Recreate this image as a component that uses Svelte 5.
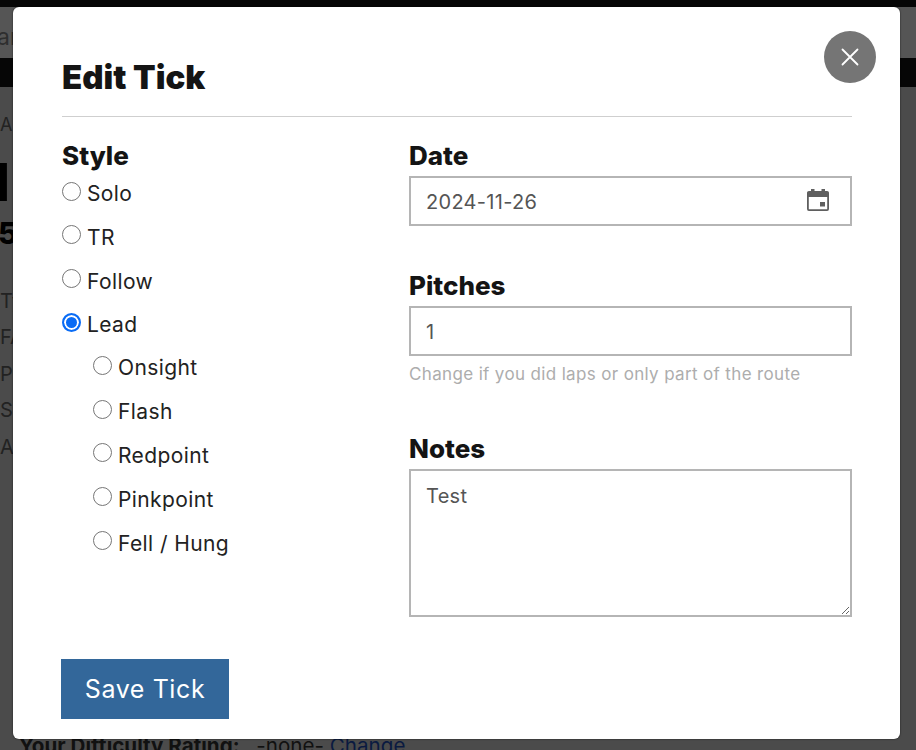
<script>
	let style = $state("lead")
	let leadStyle = $state("")
	let date = $state("2024-11-26")
	let pitches = $state("1")
	let notes = $state("Test")

	const styles = [
		{ value: "solo", label: "Solo" },
		{ value: "tr", label: "TR" },
		{ value: "follow", label: "Follow" },
		{ value: "lead", label: "Lead" }
	]
	const leadStyles = ["Onsight", "Flash", "Redpoint", "Pinkpoint", "Fell / Hung"]
</script>

<div class="page">
	<header class="nav">
		<div class="search"><span>ar</span></div>
	</header>
	<div class="crumbs">Al</div>
	<div class="title">I</div>
	<div class="grade">5</div>
	<div class="facts">
		<div>Ty</div>
		<div>FA</div>
		<div>Pa</div>
		<div>SI</div>
		<div>Ac</div>
	</div>
	<div class="rating"><b>Your Difficulty Rating:</b> <span>-none-</span> <a href="#change">Change</a></div>
</div>

<div class="modal">
	<button class="close" aria-label="Close">
		<svg width="18" height="18" viewBox="0 0 18 18"><path d="M1.5 1.5l15 15M16.5 1.5l-15 15" stroke="#fff" stroke-width="1.8" stroke-linecap="round" fill="none" /></svg>
	</button>

	<h2>Edit Tick</h2>

	<div class="columns">
		<div class="left">
			<h3>Style</h3>
			{#each styles as s}
				<label class="radio">
					<input type="radio" name="style" value={s.value} bind:group={style}>
					<span>{s.label}</span>
				</label>
			{/each}
			<div class="sub">
				{#each leadStyles as s}
					<label class="radio">
						<input type="radio" name="lead" value={s} bind:group={leadStyle}>
						<span>{s}</span>
					</label>
				{/each}
			</div>
		</div>

		<div class="right">
			<div class="field date">
				<h3>Date</h3>
				<div class="date-box">
					<input type="text" bind:value={date}>
					<svg class="cal" width="24" height="24" viewBox="0 0 24 24" fill="none">
						<rect x="1.9" y="3.9" width="20.2" height="18.2" rx="1" stroke="#5f5f5f" stroke-width="1.8" />
						<path d="M1.5 4h21v5h-21zM5 1h3.500v3H5zM15.500 1H19v3h-3.500zM14 14h5v4.500h-5z" fill="#5f5f5f" />
					</svg>
				</div>
			</div>
			<div class="field pitches">
				<h3>Pitches</h3>
				<input type="text" bind:value={pitches}>
				<div class="hint">Change if you did laps or only part of the route</div>
			</div>
			<div class="field">
				<h3>Notes</h3>
				<textarea bind:value={notes}></textarea>
			</div>
		</div>
	</div>

	<button class="save">Save Tick</button>
</div>

<style>
	:global(body) {
		background: #4b4b4b;
		font-family: Inter, "Liberation Sans", sans-serif;
	}

	/* - page behind the modal - */
	.page {
		height: 750px;
		overflow: hidden;
		color: #1a1a1a;
		box-sizing: border-box;
	}

	.nav {
		height: 87px;
		padding: 7px 0 0;
		box-sizing: border-box;
		background: #060606;
	}

	.search {
		height: 51px;
		background: #555;
		color: #2e2e2e;
		font-size: 23px;
		line-height: 60px;
		overflow: hidden;
		white-space: nowrap;
	}

	.search span {
		margin-left: -3px;
	}

	.crumbs {
		margin-top: 28px;
		font-size: 18px;
		line-height: 20px;
		color: #222;
	}

	.title {
		margin-top: 20px;
		font-size: 52px;
		line-height: 56px;
		font-weight: 800;
		color: #000;
		margin-left: -5px;
	}

	.grade {
		margin-top: 6px;
		font-size: 30px;
		line-height: 32px;
		font-weight: 800;
		color: #000;
		margin-left: -2px;
	}

	.facts {
		margin-top: 34px;
		font-size: 20px;
		line-height: 36.4px;
		color: #222;
	}

	.rating {
		margin: 268px 0 0 19px;
		font-size: 20.6px;
		line-height: 26px;
		white-space: nowrap;
		color: #111;
	}

	.rating span {
		margin-left: 11px;
	}

	.rating a {
		color: #0a1a40;
		text-decoration: none;
	}

	/* - modal - */
	.modal {
		position: absolute;
		top: 7px;
		left: 13px;
		width: 887px;
		height: 732px;
		padding: 50px 48px 0 49px;
		box-sizing: border-box;
		background: #fff;
		border-radius: 6px;
		box-shadow: 0 0 2px rgba(0, 0, 0, 0.7);
	}

	.close {
		position: absolute;
		top: 24px;
		left: 811px;
		width: 52px;
		height: 52px;
		padding: 0;
		display: flex;
		align-items: center;
		justify-content: center;
		border: none;
		border-radius: 50%;
		background: #757575;
	}

	h2 {
		margin: 0;
		padding-bottom: 18px;
		border-bottom: 1px solid #cfcfcf;
		font-size: 33px;
		line-height: 41px;
		font-weight: 900;
		color: #141414;
	}

	h3 {
		margin: 0;
		font-size: 26px;
		line-height: 32px;
		font-weight: 800;
		color: #141414;
	}

	.columns {
		display: flex;
		margin-top: 23px;
		height: 519px;
	}

	.left {
		width: 347px;
		flex-shrink: 0;
	}

	.left h3 {
		margin-bottom: -0.4px;
	}

	.right {
		flex: 1;
	}

	.radio {
		display: flex;
		align-items: center;
		height: 43.8px;
		font-size: 21px;
		letter-spacing: 0.4px;
		color: #222;
	}

	.radio input {
		appearance: none;
		width: 19px;
		height: 19px;
		margin: -5px 6px 0 0;
		background: #fff;
		border: 1px solid #767676;
		border-radius: 50%;
		box-sizing: border-box;
	}

	.radio input:checked {
		border: 2px solid #0a6cf5;
		box-shadow: inset 0 0 0 2px #fff;
		background: #0a6cf5;
	}

	.sub {
		margin-top: -0.8px;
		padding-left: 31px;
	}

	.field input,
	textarea {
		display: block;
		width: 100%;
		box-sizing: border-box;
		padding: 0 15px;
		margin-top: 4px;
		border: 2px solid #b5b5b5;
		border-radius: 0;
		font-family: inherit;
		font-size: 20px;
		letter-spacing: 0.3px;
		color: #555;
		background: #fff;
		outline: none;
	}

	.field input {
		height: 50px;
		padding-top: 2px;
	}

	.date-box {
		position: relative;
	}

	.cal {
		position: absolute;
		top: 12px;
		right: 22px;
	}

	.field.date {
		height: 130px;
	}

	.field.pitches {
		height: 163px;
	}

	.hint {
		margin-top: 6px;
		font-size: 17px;
		line-height: 24px;
		letter-spacing: 0.35px;
		color: #adadad;
	}

	textarea {
		height: 148px;
		padding-top: 12px;
		line-height: 26px;
	}

	.save {
		display: block;
		width: 168px;
		height: 60px;
		margin-left: -1px;
		padding: 0;
		border: none;
		background: #33679a;
		color: #fff;
		font-family: inherit;
		font-size: 25px;
		letter-spacing: 0.6px;
	}
</style>
